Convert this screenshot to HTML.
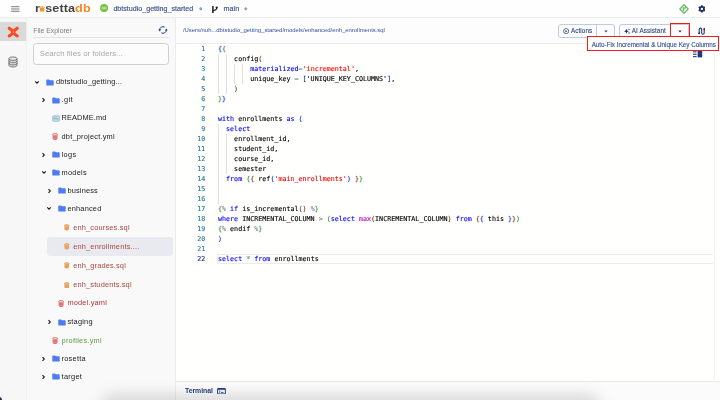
<!DOCTYPE html>
<html lang="en">
<head>
<meta charset="utf-8">
<title>rosettadb</title>
<style>
*{box-sizing:border-box;margin:0;padding:0}
html,body{width:720px;height:400px;overflow:hidden;background:#fdfdfc}
body{position:relative;font-family:"Liberation Sans",sans-serif;color:#333;-webkit-font-smoothing:antialiased}
#app{position:absolute;left:0;top:0;width:720px;height:400px;overflow:hidden;will-change:transform}
.abs{position:absolute}
#topbar{left:0;top:0;width:720px;height:18px;background:#fefefe;border-bottom:1px solid #ececec}
#strip{left:0;top:18px;width:27px;height:382px;background:#f7f7f7;border-right:1px solid #efefef}
#stripsel{left:0;top:22.3px;width:26px;height:18.3px;background:#dadada}
#side{left:27px;top:18px;width:149px;height:382px;background:#f9f9f9;border-right:1px solid #ececec}
#main{left:176px;top:18px;width:544px;height:382px;background:#fffffe}
#crumbbar{left:176px;top:18px;width:544px;height:26px;background:#fdfdfd;border-bottom:1px solid #ebebeb}
.t{position:absolute;white-space:nowrap;line-height:1}
.logo{font-weight:bold;font-size:11.2px;letter-spacing:0.06px;color:#444}
.nav{font-size:7.12px;color:#33477a;-webkit-text-stroke:0.15px #33477a}
.row{position:absolute;font-size:7.4px;color:#222;white-space:nowrap;line-height:1}
.sql{color:#a8463c}
.yml{color:#a63636}
.grn{color:#5f9a3c}
.chev{position:absolute;width:6px;height:6px}
.ico{position:absolute}
#code{left:176px;top:44px;width:530px;height:338px;font-family:"DejaVu Sans Mono","Liberation Mono",monospace;font-size:6.7px;line-height:10px;color:#000;-webkit-text-stroke:0.12px}
.ln{position:absolute;left:0;width:29.4px;text-align:right;color:#237893;white-space:pre;-webkit-text-stroke-color:#237893}
.cl{position:absolute;left:42px;white-space:pre}
.k{color:#0000ff}.s{color:#ff0000}.b1{color:#0431fa}.b2{color:#319331}.b3{color:#7b3814}.f{color:#c700c7}.g{color:#778899}
.guide{position:absolute;width:1px;background:#e0e0e0}
.btn{position:absolute;border:1px solid #c0cbde;border-radius:3px;background:#fdfdfe}
.btxt{font-size:6.45px;color:#2f447c;-webkit-text-stroke:0.12px #2f447c}
</style>
</head>
<body>
<div id="app">
<div id="topbar" class="abs"></div>
<div id="strip" class="abs"></div>
<div id="stripsel" class="abs"></div>
<div id="side" class="abs"></div>
<div id="main" class="abs"></div>
<div id="crumbbar" class="abs"></div>

<!-- TOPBAR -->
<svg class="ico" style="left:11px;top:6px" width="9" height="6" viewBox="0 0 9 6"><path d="M0.2 0.7h8.3M0.2 3h8.3M0.2 5.3h8.3" stroke="#555" stroke-width="0.8" fill="none"/></svg>
<div class="t logo" style="left:34.8px;top:2.6px;transform:scaleX(1.13);transform-origin:0 0">r<span style="display:inline-block;width:4.65px;height:1px"></span>setta<span style="color:#f5871f">db</span></div>
<svg class="ico" style="left:39px;top:6px" width="7" height="6" viewBox="0 0 7 6"><rect x="0.8" y="0.4" width="4.6" height="5.0" rx="0.9" fill="#f39232"/><rect x="0.8" y="0.4" width="4.6" height="1.3" rx="0.65" fill="#f9c684"/></svg>
<svg class="ico" style="left:99.7px;top:4.1px" width="8.2" height="8.2" viewBox="0 0 9 9"><circle cx="4.5" cy="4.5" r="4.4" fill="#74c23c"/><circle cx="3.2" cy="4.5" r="1.15" fill="none" stroke="#e6f6d8" stroke-width="0.7"/><circle cx="5.8" cy="4.5" r="1.15" fill="none" stroke="#e6f6d8" stroke-width="0.7"/></svg>
<svg class="ico" style="left:198.8px;top:7.2px" width="3.6" height="3.6" viewBox="0 0 4 4"><path d="M2 0.1L3.9 2L2 3.9L0.1 2Z" fill="#6f8cc4"/><path d="M0.6 2H3.4" stroke="#e8eefa" stroke-width="0.35"/></svg>
<svg class="ico" style="left:211px;top:4.5px" width="8" height="9" viewBox="0 0 8 9"><path d="M1.9 0.9V7.9" stroke="#1e1e1e" stroke-width="1.5" fill="none"/><path d="M5.7 2.8V3.4C5.7 4.9 3.8 5.2 2 5.6" stroke="#1e1e1e" stroke-width="1.1" fill="none"/><circle cx="5.7" cy="2.6" r="1.15" fill="#1e1e1e"/></svg>
<svg class="ico" style="left:244.3px;top:7.2px" width="3.6" height="3.6" viewBox="0 0 4 4"><path d="M2 0.1L3.9 2L2 3.9L0.1 2Z" fill="#6f8cc4"/><path d="M0.6 2H3.4" stroke="#e8eefa" stroke-width="0.35"/></svg>
<svg class="ico" style="left:678.7px;top:3.7px" width="10" height="10" viewBox="0 0 10 10"><path d="M5 0.7L9.3 5L5 9.3L0.7 5Z" fill="#eef8ea" stroke="#55b155" stroke-width="1.1"/><path d="M4.2 2.8v4.4M4.2 5.4C5.8 5.2 6.1 4.6 6.1 3.7" stroke="#3f9d3f" stroke-width="0.8" fill="none"/><circle cx="6.1" cy="3.5" r="0.6" fill="#3f9d3f"/></svg>
<svg class="ico" style="left:697.5px;top:5px" width="7.8" height="7.8" viewBox="0 0 10 10"><g fill="#1f2f6b"><circle cx="5" cy="5" r="3.6"/><rect x="3.8" y="0.3" width="2.4" height="9.4" rx="0.5"/><rect x="3.8" y="0.3" width="2.4" height="9.4" rx="0.5" transform="rotate(60 5 5)"/><rect x="3.8" y="0.3" width="2.4" height="9.4" rx="0.5" transform="rotate(120 5 5)"/></g><circle cx="5" cy="5" r="1.5" fill="#fefefe"/></svg>

<!-- STRIP ICONS -->
<svg class="ico" style="left:6.5px;top:25.5px" width="12.5" height="12.5" viewBox="0 0 12.5 12.5"><path d="M2.3 2.3Q5.2 3.9 6.25 6.1Q7.3 8.3 10.2 9.9M10.2 2.3Q7.3 3.9 6.25 6.1Q5.2 8.3 2.3 9.9" stroke="#cdeaec" stroke-width="4.3" fill="none" stroke-linecap="round"/><path d="M2.3 2.3Q5.2 3.9 6.25 6.1Q7.3 8.3 10.2 9.9M10.2 2.3Q7.3 3.9 6.25 6.1Q5.2 8.3 2.3 9.9" stroke="#ff4a1c" stroke-width="3.2" fill="none" stroke-linecap="round"/><circle cx="6.25" cy="6.1" r="0.65" fill="#ffc4ae"/></svg>
<svg class="ico" style="left:8.4px;top:56.4px" width="10" height="12" viewBox="0 0 10 12"><path d="M0.9 2.7V9.2C0.9 10.3 2.8 11 5 11S9.1 10.3 9.1 9.2V2.7Z" fill="#dcdcdc"/><g fill="none" stroke="#6a6a6a" stroke-width="0.85"><ellipse cx="5" cy="2.7" rx="4.1" ry="1.8" fill="#e4e4e4"/><path d="M0.9 2.7v6.5c0 1.1 1.9 1.8 4.1 1.8s4.1-.7 4.1-1.8V2.7"/><path d="M0.9 4.9c0 1.1 1.9 1.8 4.1 1.8s4.1-.7 4.1-1.8M0.9 7.1c0 1.1 1.9 1.8 4.1 1.8s4.1-.7 4.1-1.8"/></g></svg>

<!-- SIDEBAR -->
<svg class="ico" style="left:158.2px;top:25.2px" width="10" height="10" viewBox="0 0 10 10"><g fill="none" stroke="#1f3a7a" stroke-width="1.0"><path d="M1.7 5.2A3.3 3.3 0 0 1 6.65 2.14"/><path d="M8.3 4.8A3.3 3.3 0 0 1 3.35 7.86"/></g><path d="M0.3 4.5H3.1L1.7 6.5Z" fill="#1f3a7a"/><path d="M6.9 5.5H9.7L8.3 3.5Z" fill="#1f3a7a"/></svg>
<div class="abs" style="left:33px;top:37px;width:136px;height:1px;background:#e2e2e2"></div>
<div class="abs" style="left:33px;top:42.5px;width:136px;height:22.7px;border:1px solid #cfcfcf;border-radius:3.5px;background:#fcfcfc"></div>

<div id="tree">
<div class="abs" style="left:47px;top:237px;width:125.5px;height:18.8px;background:#e9eaf0;border-radius:3.5px"></div>
<svg class="ico" width="6" height="5" viewBox="0 0 6 5" style="left:34.40px;top:79.60px"><path d="M1.2 1.4L3 3.2L4.8 1.4" stroke="#1c1c1c" stroke-width="1.1" fill="none"/></svg>
<svg class="ico" width="8" height="7" viewBox="0 0 8 7" style="left:46.35px;top:78.60px"><path d="M0.3 1.1C0.3 0.7 0.6 0.4 1 0.4H3L3.8 1.3H7C7.4 1.3 7.7 1.6 7.7 2V5.9C7.7 6.3 7.4 6.6 7 6.6H1C0.6 6.6 0.3 6.3 0.3 5.9Z" fill="#4d7cf0"/></svg>
<div class="row " style="left:55.95px;top:78.10px;letter-spacing:0.191px">dbtstudio_getting...</div>
<svg class="ico" width="5" height="6" viewBox="0 0 5 6" style="left:41.05px;top:97.00px"><path d="M1.5 1.2L3.3 3L1.5 4.8" stroke="#1c1c1c" stroke-width="1.1" fill="none"/></svg>
<svg class="ico" width="8" height="7" viewBox="0 0 8 7" style="left:51.85px;top:96.60px"><path d="M0.3 1.1C0.3 0.7 0.6 0.4 1 0.4H3L3.8 1.3H7C7.4 1.3 7.7 1.6 7.7 2V5.9C7.7 6.3 7.4 6.6 7 6.6H1C0.6 6.6 0.3 6.3 0.3 5.9Z" fill="#4d7cf0"/></svg>
<div class="row " style="left:61.55px;top:96.10px;letter-spacing:0.414px">.git</div>
<svg class="ico" width="8" height="7" viewBox="0 0 8 7" style="left:51.65px;top:114.70px"><rect x="0.4" y="0.6" width="7.2" height="5.8" rx="1.3" fill="#c4dbe7" stroke="#93b9cc" stroke-width="0.6"/><path d="M1.8 4.8V2.4L3 3.8L4.2 2.4V4.8M5.2 3.4L6.1 4.6L7 3.4" stroke="#6f9db6" stroke-width="0.55" fill="none"/></svg>
<div class="row " style="left:61.55px;top:114.10px;letter-spacing:0.112px">README.md</div>
<svg class="ico" width="6.2" height="6.9" viewBox="0 0 12 14" style="left:51.90px;top:133.20px"><path d="M1 3V11C1 12.5 3.2 13.5 6 13.5S11 12.5 11 11V3Z" fill="#d24c4c"/><ellipse cx="6" cy="2.9" rx="5" ry="2.1" fill="#f6cccc" stroke="#d24c4c" stroke-width="1.1"/><path d="M0.5 5.6H11.5M0.5 8.3H11.5M0.5 11H11.5" stroke="#fff" stroke-width="1.0" fill="none" opacity="0.8"/></svg>
<div class="row " style="left:61.55px;top:132.60px;letter-spacing:0.212px">dbt_project.yml</div>
<svg class="ico" width="5" height="6" viewBox="0 0 5 6" style="left:41.05px;top:151.50px"><path d="M1.5 1.2L3.3 3L1.5 4.8" stroke="#1c1c1c" stroke-width="1.1" fill="none"/></svg>
<svg class="ico" width="8" height="7" viewBox="0 0 8 7" style="left:51.85px;top:151.10px"><path d="M0.3 1.1C0.3 0.7 0.6 0.4 1 0.4H3L3.8 1.3H7C7.4 1.3 7.7 1.6 7.7 2V5.9C7.7 6.3 7.4 6.6 7 6.6H1C0.6 6.6 0.3 6.3 0.3 5.9Z" fill="#4d7cf0"/></svg>
<div class="row " style="left:61.55px;top:150.60px;letter-spacing:0.346px">logs</div>
<svg class="ico" width="6" height="5" viewBox="0 0 6 5" style="left:40.65px;top:170.10px"><path d="M1.2 1.4L3 3.2L4.8 1.4" stroke="#1c1c1c" stroke-width="1.1" fill="none"/></svg>
<svg class="ico" width="8" height="7" viewBox="0 0 8 7" style="left:51.85px;top:169.10px"><path d="M0.3 1.1C0.3 0.7 0.6 0.4 1 0.4H3L3.8 1.3H7C7.4 1.3 7.7 1.6 7.7 2V5.9C7.7 6.3 7.4 6.6 7 6.6H1C0.6 6.6 0.3 6.3 0.3 5.9Z" fill="#4d7cf0"/></svg>
<div class="row " style="left:61.55px;top:168.60px;letter-spacing:0.254px">models</div>
<svg class="ico" width="5" height="6" viewBox="0 0 5 6" style="left:46.80px;top:187.70px"><path d="M1.5 1.2L3.3 3L1.5 4.8" stroke="#1c1c1c" stroke-width="1.1" fill="none"/></svg>
<svg class="ico" width="8" height="7" viewBox="0 0 8 7" style="left:57.60px;top:187.30px"><path d="M0.3 1.1C0.3 0.7 0.6 0.4 1 0.4H3L3.8 1.3H7C7.4 1.3 7.7 1.6 7.7 2V5.9C7.7 6.3 7.4 6.6 7 6.6H1C0.6 6.6 0.3 6.3 0.3 5.9Z" fill="#4d7cf0"/></svg>
<div class="row " style="left:67.45px;top:186.80px;letter-spacing:0.168px">business</div>
<svg class="ico" width="6" height="5" viewBox="0 0 6 5" style="left:46.40px;top:206.30px"><path d="M1.2 1.4L3 3.2L4.8 1.4" stroke="#1c1c1c" stroke-width="1.1" fill="none"/></svg>
<svg class="ico" width="8" height="7" viewBox="0 0 8 7" style="left:57.60px;top:205.30px"><path d="M0.3 1.1C0.3 0.7 0.6 0.4 1 0.4H3L3.8 1.3H7C7.4 1.3 7.7 1.6 7.7 2V5.9C7.7 6.3 7.4 6.6 7 6.6H1C0.6 6.6 0.3 6.3 0.3 5.9Z" fill="#4d7cf0"/></svg>
<div class="row " style="left:67.45px;top:204.80px;letter-spacing:0.197px">enhanced</div>
<svg class="ico" width="5.5" height="6.9" viewBox="0 0 12 14" style="left:64.30px;top:224.10px"><path d="M1 3V11C1 12.5 3.2 13.5 6 13.5S11 12.5 11 11V3Z" fill="#e07f2e"/><ellipse cx="6" cy="2.9" rx="5" ry="2.1" fill="#f3c08c" stroke="#e07f2e" stroke-width="1.1"/><path d="M0.5 5.6H11.5M0.5 8.3H11.5M0.5 11H11.5" stroke="#fff" stroke-width="1.0" fill="none" opacity="0.8"/></svg>
<div class="row sql" style="left:73.20px;top:223.60px;letter-spacing:0.180px">enh_courses.sql</div>
<svg class="ico" width="5.5" height="6.9" viewBox="0 0 12 14" style="left:64.30px;top:243.10px"><path d="M1 3V11C1 12.5 3.2 13.5 6 13.5S11 12.5 11 11V3Z" fill="#e07f2e"/><ellipse cx="6" cy="2.9" rx="5" ry="2.1" fill="#f3c08c" stroke="#e07f2e" stroke-width="1.1"/><path d="M0.5 5.6H11.5M0.5 8.3H11.5M0.5 11H11.5" stroke="#fff" stroke-width="1.0" fill="none" opacity="0.8"/></svg>
<div class="row sql" style="left:73.20px;top:242.60px;letter-spacing:0.180px">enh_enrollments....</div>
<svg class="ico" width="5.5" height="6.9" viewBox="0 0 12 14" style="left:64.30px;top:262.30px"><path d="M1 3V11C1 12.5 3.2 13.5 6 13.5S11 12.5 11 11V3Z" fill="#e07f2e"/><ellipse cx="6" cy="2.9" rx="5" ry="2.1" fill="#f3c08c" stroke="#e07f2e" stroke-width="1.1"/><path d="M0.5 5.6H11.5M0.5 8.3H11.5M0.5 11H11.5" stroke="#fff" stroke-width="1.0" fill="none" opacity="0.8"/></svg>
<div class="row sql" style="left:73.20px;top:261.80px;letter-spacing:0.158px">enh_grades.sql</div>
<svg class="ico" width="5.5" height="6.9" viewBox="0 0 12 14" style="left:64.30px;top:281.60px"><path d="M1 3V11C1 12.5 3.2 13.5 6 13.5S11 12.5 11 11V3Z" fill="#e07f2e"/><ellipse cx="6" cy="2.9" rx="5" ry="2.1" fill="#f3c08c" stroke="#e07f2e" stroke-width="1.1"/><path d="M0.5 5.6H11.5M0.5 8.3H11.5M0.5 11H11.5" stroke="#fff" stroke-width="1.0" fill="none" opacity="0.8"/></svg>
<div class="row sql" style="left:73.20px;top:281.10px;letter-spacing:0.164px">enh_students.sql</div>
<svg class="ico" width="6.2" height="6.9" viewBox="0 0 12 14" style="left:57.65px;top:299.90px"><path d="M1 3V11C1 12.5 3.2 13.5 6 13.5S11 12.5 11 11V3Z" fill="#d24c4c"/><ellipse cx="6" cy="2.9" rx="5" ry="2.1" fill="#f6cccc" stroke="#d24c4c" stroke-width="1.1"/><path d="M0.5 5.6H11.5M0.5 8.3H11.5M0.5 11H11.5" stroke="#fff" stroke-width="1.0" fill="none" opacity="0.8"/></svg>
<div class="row yml" style="left:67.45px;top:299.30px;letter-spacing:0.173px">model.yaml</div>
<svg class="ico" width="5" height="6" viewBox="0 0 5 6" style="left:46.80px;top:319.00px"><path d="M1.5 1.2L3.3 3L1.5 4.8" stroke="#1c1c1c" stroke-width="1.1" fill="none"/></svg>
<svg class="ico" width="8" height="7" viewBox="0 0 8 7" style="left:57.60px;top:318.60px"><path d="M0.3 1.1C0.3 0.7 0.6 0.4 1 0.4H3L3.8 1.3H7C7.4 1.3 7.7 1.6 7.7 2V5.9C7.7 6.3 7.4 6.6 7 6.6H1C0.6 6.6 0.3 6.3 0.3 5.9Z" fill="#4d7cf0"/></svg>
<div class="row " style="left:67.45px;top:318.10px;letter-spacing:0.209px">staging</div>
<svg class="ico" width="6.2" height="6.9" viewBox="0 0 12 14" style="left:51.90px;top:337.20px"><path d="M1 3V11C1 12.5 3.2 13.5 6 13.5S11 12.5 11 11V3Z" fill="#d24c4c"/><ellipse cx="6" cy="2.9" rx="5" ry="2.1" fill="#f6cccc" stroke="#d24c4c" stroke-width="1.1"/><path d="M0.5 5.6H11.5M0.5 8.3H11.5M0.5 11H11.5" stroke="#fff" stroke-width="1.0" fill="none" opacity="0.8"/></svg>
<div class="row grn" style="left:61.55px;top:336.60px;letter-spacing:0.248px">profiles.yml</div>
<svg class="ico" width="5" height="6" viewBox="0 0 5 6" style="left:41.05px;top:355.70px"><path d="M1.5 1.2L3.3 3L1.5 4.8" stroke="#1c1c1c" stroke-width="1.1" fill="none"/></svg>
<svg class="ico" width="8" height="7" viewBox="0 0 8 7" style="left:51.85px;top:355.30px"><path d="M0.3 1.1C0.3 0.7 0.6 0.4 1 0.4H3L3.8 1.3H7C7.4 1.3 7.7 1.6 7.7 2V5.9C7.7 6.3 7.4 6.6 7 6.6H1C0.6 6.6 0.3 6.3 0.3 5.9Z" fill="#4d7cf0"/></svg>
<div class="row " style="left:61.55px;top:354.80px;letter-spacing:0.248px">rosetta</div>
<svg class="ico" width="5" height="6" viewBox="0 0 5 6" style="left:41.05px;top:373.70px"><path d="M1.5 1.2L3.3 3L1.5 4.8" stroke="#1c1c1c" stroke-width="1.1" fill="none"/></svg>
<svg class="ico" width="8" height="7" viewBox="0 0 8 7" style="left:51.85px;top:373.30px"><path d="M0.3 1.1C0.3 0.7 0.6 0.4 1 0.4H3L3.8 1.3H7C7.4 1.3 7.7 1.6 7.7 2V5.9C7.7 6.3 7.4 6.6 7 6.6H1C0.6 6.6 0.3 6.3 0.3 5.9Z" fill="#4d7cf0"/></svg>
<div class="row " style="left:61.55px;top:372.80px;letter-spacing:0.289px">target</div>
</div>

<!-- CRUMB + TOOLBAR -->

<div class="btn" style="left:558.3px;top:24px;width:56.7px;height:13.5px"></div>
<div class="abs" style="left:596px;top:24px;width:1px;height:13.5px;background:#c0cbde"></div>
<svg class="ico" style="left:562.5px;top:27.7px" width="6.3" height="6.3" viewBox="0 0 7 7"><circle cx="3.5" cy="3.5" r="2.85" fill="none" stroke="#2f447c" stroke-width="0.85"/><path d="M2.7 2.1L4.9 3.5L2.7 4.9Z" fill="#2f447c"/></svg>
<svg class="ico" style="left:604px;top:30px" width="4" height="3" viewBox="0 0 4 3"><path d="M0.3 0.4H3.7L2 2.6Z" fill="#33477a"/></svg>

<div class="btn" style="left:619.3px;top:24px;width:70px;height:13.5px;border-radius:3px 0 0 3px"></div>
<svg class="ico" style="left:624px;top:27.6px" width="6.4" height="6.4" viewBox="0 0 8 8"><path d="M3 0.9L3.9 3.1L6.1 4L3.9 4.9L3 7.1L2.1 4.9L-0.1 4L2.1 3.1Z" fill="#1f2f6b"/><circle cx="6.3" cy="1.7" r="0.85" fill="#1f2f6b"/><circle cx="6.3" cy="6.3" r="0.85" fill="#1f2f6b"/></svg>
<div class="abs" style="left:670px;top:23px;width:20px;height:14px;border:1.1px solid #f01e16"></div>
<svg class="ico" style="left:678px;top:29.5px" width="4" height="3" viewBox="0 0 4 3"><path d="M0.3 0.4H3.7L2 2.6Z" fill="#222a55"/></svg>

<svg class="ico" style="left:697.6px;top:26.6px" width="7.6" height="8.2" viewBox="0 0 7.6 8.2"><path d="M1.2 6.2V2.4A1.25 1.25 0 0 1 3.7 2.4V6A1.25 1.25 0 0 0 6.2 6V2.2" stroke="#1f2f6b" stroke-width="1.05" fill="none"/><circle cx="1.2" cy="6.3" r="1.05" fill="#1f2f6b"/><circle cx="6.3" cy="2.1" r="1.05" fill="#1f2f6b"/></svg>

<!-- CODE -->
<div id="code" class="abs">
<div class="abs" style="left:41px;top:210.00px;width:496px;height:10px;border:1px solid #ebebeb;border-right:none"></div>
<div class="guide" style="left:42.20px;top:10.00px;height:40.00px"></div>
<div class="guide" style="left:50.27px;top:10.00px;height:40.00px"></div>
<div class="guide" style="left:58.33px;top:20.00px;height:20.00px"></div>
<div class="guide" style="left:66.40px;top:20.00px;height:20.00px"></div>
<div class="guide" style="left:42.20px;top:80.00px;height:80.00px"></div>
<div class="guide" style="left:50.27px;top:90.00px;height:40.00px"></div>
<div class="ln" style="top:0.20px">1</div><div class="cl" style="top:0.20px"><span class="b1">{</span><span class="b2">{</span></div>
<div class="ln" style="top:10.20px">2</div><div class="cl" style="top:10.20px">    config<span class="b3">(</span></div>
<div class="ln" style="top:20.20px">3</div><div class="cl" style="top:20.20px">        <span class="k">materialized</span><span class="g">=</span><span class="s">'incremental'</span>,</div>
<div class="ln" style="top:30.20px">4</div><div class="cl" style="top:30.20px">        unique_key <span class="g">=</span> <span class="b1">[</span>'UNIQUE_KEY_COLUMNS'<span class="b1">]</span>,</div>
<div class="ln" style="top:40.20px">5</div><div class="cl" style="top:40.20px">    <span class="b3">)</span></div>
<div class="ln" style="top:50.20px">6</div><div class="cl" style="top:50.20px"><span class="b2">}</span><span class="b1">}</span></div>
<div class="ln" style="top:60.20px">7</div><div class="cl" style="top:60.20px"></div>
<div class="ln" style="top:70.20px">8</div><div class="cl" style="top:70.20px"><span class="k">with</span> enrollments <span class="k">as</span> <span class="b1">(</span></div>
<div class="ln" style="top:80.20px">9</div><div class="cl" style="top:80.20px">  <span class="k">select</span></div>
<div class="ln" style="top:90.20px">10</div><div class="cl" style="top:90.20px">    enrollment_id,</div>
<div class="ln" style="top:100.20px">11</div><div class="cl" style="top:100.20px">    student_id,</div>
<div class="ln" style="top:110.20px">12</div><div class="cl" style="top:110.20px">    course_id,</div>
<div class="ln" style="top:120.20px">13</div><div class="cl" style="top:120.20px">    semester</div>
<div class="ln" style="top:130.20px">14</div><div class="cl" style="top:130.20px">  <span class="k">from</span> <span class="b2">{</span><span class="b3">{</span> ref<span class="b1">(</span><span class="s">'main_enrollments'</span><span class="b1">)</span> <span class="b3">}</span><span class="b2">}</span></div>
<div class="ln" style="top:140.20px">15</div><div class="cl" style="top:140.20px"></div>
<div class="ln" style="top:150.20px">16</div><div class="cl" style="top:150.20px"></div>
<div class="ln" style="top:160.20px">17</div><div class="cl" style="top:160.20px"><span class="b2">{</span><span class="g">%</span> <span class="k">if</span> is_incremental<span class="b3">()</span> <span class="g">%</span><span class="b2">}</span></div>
<div class="ln" style="top:170.20px">18</div><div class="cl" style="top:170.20px"><span class="k">where</span> INCREMENTAL_COLUMN <span class="g">&gt;</span> <span class="b2">(</span><span class="k">select</span> <span class="f">max</span><span class="b3">(</span>INCREMENTAL_COLUMN<span class="b3">)</span> <span class="k">from</span> <span class="b3">{</span><span class="b1">{</span> this <span class="b1">}</span><span class="b3">}</span><span class="b2">)</span></div>
<div class="ln" style="top:180.20px">19</div><div class="cl" style="top:180.20px"><span class="b2">{</span><span class="g">%</span> endif <span class="g">%</span><span class="b2">}</span></div>
<div class="ln" style="top:190.20px">20</div><div class="cl" style="top:190.20px"><span class="b1">)</span></div>
<div class="ln" style="top:200.20px">21</div><div class="cl" style="top:200.20px"></div>
<div class="ln" style="top:210.20px;color:#0b216f;-webkit-text-stroke-color:#0b216f">22</div><div class="cl" style="top:210.20px"><span class="k">select</span> <span class="g">*</span> <span class="k">from</span> enrollments</div>
</div>

<!-- dropdown -->
<div class="abs" style="left:587.3px;top:36.1px;width:131.5px;height:15.3px;border:1.2px solid #f01e16;background:#fdfdfd"></div>
<svg class="ico" style="left:693px;top:51px" width="10" height="7" viewBox="0 0 10 7"><g fill="#1f3a7a"><rect x="0" y="0.3" width="3.6" height="1.1"/><rect x="0" y="2.7" width="3.6" height="1.1"/><rect x="0" y="5.1" width="3.6" height="1.1"/><rect x="4.6" y="0" width="4.6" height="6.4"/></g></svg>
<div class="abs" style="left:714px;top:53px;width:1px;height:328px;background:#f4f4f4"></div>

<!-- TERMINAL -->
<div class="abs" style="left:176px;top:381px;width:544px;height:19px;background:#fbfbfb;border-top:1px solid #e9e9e9"></div>
<svg class="ico" style="left:217.2px;top:387.9px" width="9" height="6.6" viewBox="0 0 9 6.6"><rect x="0.1" y="0.1" width="8.7" height="6.3" rx="1.2" fill="#1f3a7a"/><rect x="1" y="1.7" width="6.9" height="3.8" rx="0.4" fill="#f4f6fb"/><path d="M1.9 2.5L3.2 3.6L1.9 4.7" stroke="#1f3a7a" stroke-width="0.8" fill="none"/><path d="M4 4.6H6.6" stroke="#1f3a7a" stroke-width="0.8"/></svg>

<div class="t" style="left:113.40px;top:6.1px;font-size:7.12px;letter-spacing:-0.002px;color:#38528c;-webkit-text-stroke:0.15px #38528c">dbtstudio_getting_started</div>
<div class="t" style="left:223.60px;top:6.1px;font-size:7.12px;letter-spacing:0.059px;color:#38528c;-webkit-text-stroke:0.15px #38528c">main</div>
<div class="t" style="left:33.20px;top:27.8px;font-size:6.9px;letter-spacing:0.005px;color:#7c7c7c">File Explorer</div>
<div class="t" style="left:39.70px;top:49.9px;font-size:7.8px;letter-spacing:0.044px;color:#a9a9a9">Search files or folders...</div>
<div class="t" style="left:182.95px;top:28.1px;font-size:5.95px;letter-spacing:-0.023px;color:#34549a">/Users/nuh...dbtstudio_getting_started/models/enhanced/enh_enrollments.sql</div>
<div class="t" style="left:571.00px;top:27.6px;font-size:6.3px;letter-spacing:0.091px;color:#2f447c;-webkit-text-stroke:0.1px #2f447c">Actions</div>
<div class="t" style="left:631.80px;top:27.6px;font-size:6.3px;letter-spacing:0.099px;color:#2f447c;-webkit-text-stroke:0.1px #2f447c">AI Assistant</div>
<div class="t" style="left:591.70px;top:41.8px;font-size:6.3px;letter-spacing:-0.018px;color:#2f4f92;-webkit-text-stroke:0.1px #2f4f92">Auto-Fix Incremental &amp; Unique Key Columns</div>
<div class="t" style="left:185.00px;top:387.9px;font-size:6.9px;letter-spacing:-0.046px;font-weight:bold;color:#1f3a7a">Terminal</div>
<!-- bottom shadow -->
<div class="abs" style="left:100px;top:394px;width:502px;height:30px;background:rgba(60,60,60,0.17);border-radius:15px;filter:blur(7px);pointer-events:none"></div>
<div class="abs" style="left:-3px;top:397px;width:4.5px;height:6px;background:#232a5a;border-radius:0 3px 0 0"></div>


</div>
</body>
</html>
